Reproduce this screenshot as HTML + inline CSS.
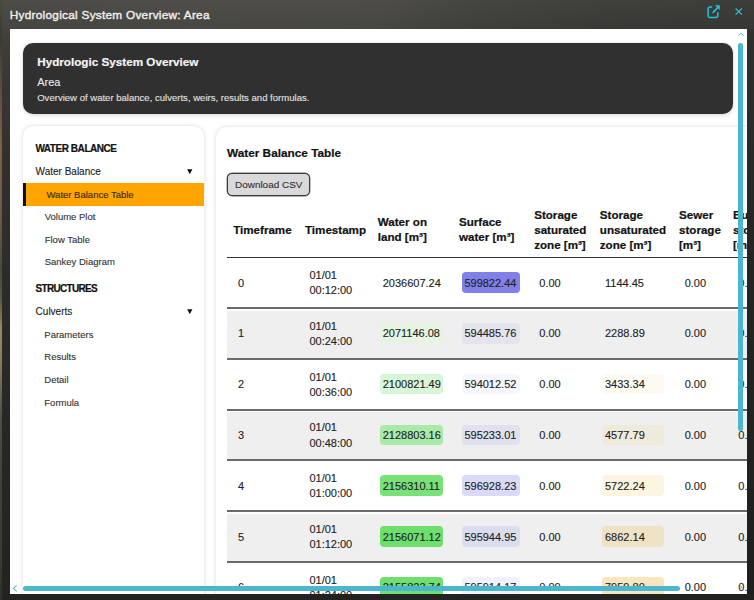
<!DOCTYPE html>
<html><head><meta charset="utf-8"><style>
html,body{margin:0;padding:0;width:754px;height:600px;overflow:hidden;position:relative;background:#2b2b29;font-family:"Liberation Sans",sans-serif}
.t{position:absolute;white-space:nowrap}
.t.r{-webkit-text-stroke:0.12px currentColor}
.t.b{-webkit-text-stroke:0.2px currentColor}
.ic{position:absolute}
#bg{position:absolute;left:0;top:0;width:754px;height:600px;background:linear-gradient(180deg,#4a4a3c 0px,#3a3a30 40px,#5a4a38 80px,#7a6448 150px,#6a5a42 220px,#4a4a36 270px,#5c5840 300px,#9a8a60 330px,#8a7c58 360px,#4a5040 420px,#3a4438 480px,#3a3c30 560px,#30302a 600px)}
#frame{position:absolute;left:2px;top:0;width:752px;height:600px;background:linear-gradient(90deg,rgba(0,0,0,0) 0%,rgba(0,0,0,0) 60%,rgba(0,0,0,0.12) 100%),linear-gradient(180deg,#4a4843 0px,#43413c 29px,#393835 70px,#32312f 150px,#2b2b29 300px,#262624 450px,#232321 600px)}
#panel{position:absolute;left:10px;top:29px;width:736.5px;height:565px;background:#fff;overflow:hidden}
#hdr{position:absolute;left:13px;top:14px;width:709.7px;height:71px;background:#303030;border-radius:10px;box-shadow:0 1px 4px rgba(0,0,0,0.17)}
#side{position:absolute;left:23px;top:125.5px;width:181px;height:520px;background:#fff;border-radius:10px;box-shadow:0 0 5px rgba(0,0,0,0.13),0 0 1px rgba(0,0,0,0.1)}
#active{position:absolute;left:23px;top:183px;width:181px;height:22.5px;background:#ffa500;box-shadow:inset 3px 0 0 #111}
.tri{position:absolute;width:0;height:0;border-left:3.3px solid transparent;border-right:3.3px solid transparent;border-top:5px solid #111}
#content{position:absolute;left:216px;top:126.5px;width:600px;height:520px;background:#fff;border-radius:10px;box-shadow:0 0 5px rgba(0,0,0,0.13),0 0 1px rgba(0,0,0,0.1)}
#btn{position:absolute;left:227px;top:172.5px;width:81.4px;height:21.8px;background:#d9d9d9;border:1px solid #3a3a3a;border-radius:5px;box-shadow:0 0 0 0.4px #666}
.hline{position:absolute;left:227px;width:520px}
.bd{position:absolute;border-radius:4px}
#vthumb{position:absolute;left:738.3px;top:42.6px;width:5px;height:388px;background:#4db6cf;border-radius:3px}
#hthumb{position:absolute;left:22.5px;top:585.8px;width:657.5px;height:5px;background:#4db6cf;border-radius:3px}
#rframe{position:absolute;left:746.5px;top:29px;width:7.5px;height:571px;background:linear-gradient(180deg,#30302d 0px,#252523 200px,#1f201e 571px)}
#topband{position:absolute;left:2px;top:0;width:752px;height:29px;background:linear-gradient(180deg,rgba(255,255,255,0.02),rgba(0,0,0,0.05)),linear-gradient(90deg,#4a4843 0px,#4c4a45 200px,#4a4944 380px,#41413d 480px,#3c3d39 600px,#393a36 751px)}
#bframe{position:absolute;left:2px;top:593.8px;width:752px;height:6.2px;background:#222221}
</style></head><body>
<div id="bg"></div><div id="frame"></div><div id="topband"></div><div class="t r" style="left:9.8px;top:8.24px;font-size:11.8px;line-height:15.34px;font-weight:400;color:#efefef;letter-spacing:0.27px;-webkit-text-stroke:0.4px #efefef">Hydrological System Overview: Area</div>
<svg class="ic" style="left:704px;top:2px" width="20" height="20" viewBox="0 0 20 20">
<path d="M8.2 4.9 H6.1 a2 2 0 0 0 -2 2 V13.6 a2 2 0 0 0 2 2 H11.8 a2 2 0 0 0 2 -2 V10.2" fill="none" stroke="#1fc3df" stroke-width="1.5"/>
<path d="M8.6 10.8 L13.9 5.5" stroke="#1fc3df" stroke-width="1.7" fill="none"/>
<path d="M10.9 3.2 H15.8 V8.1 Z" fill="#1fc3df"/>
</svg><svg class="ic" style="left:732px;top:5px" width="14" height="14" viewBox="0 0 14 14">
<path d="M3.6 3.5 L9.9 9.6 M9.9 3.5 L3.6 9.6" stroke="#3cb8d6" stroke-width="1.2" fill="none"/>
</svg><div id="panel"><div id="hdr"></div></div><div class="t b" style="left:37.2px;top:54.14px;font-size:11.7px;line-height:15.21px;font-weight:700;color:#f4f4f4;">Hydrologic System Overview</div>
<div class="t r" style="left:37.2px;top:74.64px;font-size:11px;line-height:14.3px;font-weight:400;color:#e8e8e8;">Area</div>
<div class="t r" style="left:37.2px;top:91.78px;font-size:9.55px;line-height:12.42px;font-weight:400;color:#e0e0e0;">Overview of water balance, culverts, weirs, results and formulas.</div>
<div id="side"></div><div id="active"></div><div class="t b" style="left:35.4px;top:142.23px;font-size:10px;line-height:13.0px;font-weight:700;color:#111;letter-spacing:-0.45px">WATER BALANCE</div>
<div class="t r" style="left:35.6px;top:164.63px;font-size:10px;line-height:13.0px;font-weight:400;color:#222;">Water Balance</div>
<svg class="ic" style="left:186.5px;top:168.6px" width="6" height="6" viewBox="0 0 6 6"><path d="M0.2 0.2 H5.4 L2.8 5.3 Z" fill="#111"/></svg><div class="t r" style="left:46.5px;top:188.73px;font-size:9.5px;line-height:12.35px;font-weight:400;color:#3a2a00;">Water Balance Table</div>
<div class="t r" style="left:44.7px;top:210.73px;font-size:9.5px;line-height:12.35px;font-weight:400;color:#333;">Volume Plot</div>
<div class="t r" style="left:44.7px;top:233.83px;font-size:9.5px;line-height:12.35px;font-weight:400;color:#333;">Flow Table</div>
<div class="t r" style="left:44.7px;top:256.13px;font-size:9.5px;line-height:12.35px;font-weight:400;color:#333;">Sankey Diagram</div>
<div class="t b" style="left:35.6px;top:282.44px;font-size:10px;line-height:13.0px;font-weight:700;color:#111;letter-spacing:-0.7px">STRUCTURES</div>
<div class="t r" style="left:35.6px;top:304.74px;font-size:10px;line-height:13.0px;font-weight:400;color:#222;">Culverts</div>
<svg class="ic" style="left:186.5px;top:308.7px" width="6" height="6" viewBox="0 0 6 6"><path d="M0.2 0.2 H5.4 L2.8 5.3 Z" fill="#111"/></svg><div class="t r" style="left:44.3px;top:328.73px;font-size:9.5px;line-height:12.35px;font-weight:400;color:#333;">Parameters</div>
<div class="t r" style="left:44.3px;top:351.43px;font-size:9.5px;line-height:12.35px;font-weight:400;color:#333;">Results</div>
<div class="t r" style="left:44.3px;top:374.13px;font-size:9.5px;line-height:12.35px;font-weight:400;color:#333;">Detail</div>
<div class="t r" style="left:44.3px;top:396.83px;font-size:9.5px;line-height:12.35px;font-weight:400;color:#333;">Formula</div>
<div id="content"></div><div class="t b" style="left:227px;top:145.54px;font-size:11.8px;line-height:15.34px;font-weight:700;color:#111;">Water Balance Table</div>
<div id="btn"></div><div class="t r" style="left:235px;top:178.99px;font-size:9.95px;line-height:12.93px;font-weight:400;color:#333;">Download CSV</div>
<div class="t b" style="left:233.2px;top:222.04px;font-size:11.6px;line-height:15.08px;font-weight:700;color:#111;">Timeframe</div>
<div class="t b" style="left:305px;top:222.04px;font-size:11.6px;line-height:15.08px;font-weight:700;color:#111;">Timestamp</div>
<div class="t b" style="left:377.8px;top:214.24px;font-size:11.6px;line-height:15.08px;font-weight:700;color:#111;">Water on</div>
<div class="t b" style="left:377.8px;top:229.24px;font-size:11.6px;line-height:15.08px;font-weight:700;color:#111;">land [m&sup3;]</div>
<div class="t b" style="left:459px;top:214.24px;font-size:11.6px;line-height:15.08px;font-weight:700;color:#111;">Surface</div>
<div class="t b" style="left:459px;top:229.24px;font-size:11.6px;line-height:15.08px;font-weight:700;color:#111;">water [m&sup3;]</div>
<div class="t b" style="left:534.2px;top:207.24px;font-size:11.6px;line-height:15.08px;font-weight:700;color:#111;">Storage</div>
<div class="t b" style="left:534.2px;top:222.24px;font-size:11.6px;line-height:15.08px;font-weight:700;color:#111;">saturated</div>
<div class="t b" style="left:534.2px;top:237.24px;font-size:11.6px;line-height:15.08px;font-weight:700;color:#111;">zone [m&sup3;]</div>
<div class="t b" style="left:599.8px;top:207.24px;font-size:11.6px;line-height:15.08px;font-weight:700;color:#111;">Storage</div>
<div class="t b" style="left:599.8px;top:222.24px;font-size:11.6px;line-height:15.08px;font-weight:700;color:#111;">unsaturated</div>
<div class="t b" style="left:599.8px;top:237.24px;font-size:11.6px;line-height:15.08px;font-weight:700;color:#111;">zone [m&sup3;]</div>
<div class="t b" style="left:679px;top:207.24px;font-size:11.6px;line-height:15.08px;font-weight:700;color:#111;">Sewer</div>
<div class="t b" style="left:679px;top:222.24px;font-size:11.6px;line-height:15.08px;font-weight:700;color:#111;">storage</div>
<div class="t b" style="left:679px;top:237.24px;font-size:11.6px;line-height:15.08px;font-weight:700;color:#111;">[m&sup3;]</div>
<div class="t b" style="left:733px;top:207.24px;font-size:11.6px;line-height:15.08px;font-weight:700;color:#111;">Buffer</div>
<div class="t b" style="left:733px;top:222.24px;font-size:11.6px;line-height:15.08px;font-weight:700;color:#111;">storage</div>
<div class="t b" style="left:733px;top:237.24px;font-size:11.6px;line-height:15.08px;font-weight:700;color:#111;">[m&sup3;]</div>
<div class="hline" style="top:257px;height:1px;background:#333"></div><div class="hline" style="top:307.00px;height:2px;background:#6a6a6a"></div><div class="bd" style="left:461.7px;top:272.20px;width:58px;height:20.6px;background:#8080e8"></div><div class="t r" style="left:238px;top:275.54px;font-size:11px;line-height:14.3px;font-weight:400;color:#222;">0</div>
<div class="t r" style="left:309.4px;top:268.04px;font-size:11px;line-height:14.3px;font-weight:400;color:#222;">01/01</div>
<div class="t r" style="left:309.4px;top:283.14px;font-size:11px;line-height:14.3px;font-weight:400;color:#222;">00:12:00</div>
<div class="t r" style="left:382.7px;top:275.54px;font-size:11px;line-height:14.3px;font-weight:400;color:#222;">2036607.24</div>
<div class="t r" style="left:464.4px;top:275.54px;font-size:11px;line-height:14.3px;font-weight:400;color:#222;">599822.44</div>
<div class="t r" style="left:539.3px;top:275.54px;font-size:11px;line-height:14.3px;font-weight:400;color:#222;">0.00</div>
<div class="t r" style="left:605.0px;top:275.54px;font-size:11px;line-height:14.3px;font-weight:400;color:#222;">1144.45</div>
<div class="t r" style="left:684.7px;top:275.54px;font-size:11px;line-height:14.3px;font-weight:400;color:#222;">0.00</div>
<div class="t r" style="left:738.3px;top:275.54px;font-size:11px;line-height:14.3px;font-weight:400;color:#222;">0.00</div>
<div class="hline" style="top:310.80px;height:46.80px;background:#efefef"></div><div class="hline" style="top:357.80px;height:2px;background:#6a6a6a"></div><div class="bd" style="left:380.2px;top:323.00px;width:63px;height:20.6px;background:#e7f4e4"></div><div class="bd" style="left:461.7px;top:323.00px;width:58px;height:20.6px;background:#e4e4ee"></div><div class="t r" style="left:238px;top:326.34px;font-size:11px;line-height:14.3px;font-weight:400;color:#222;">1</div>
<div class="t r" style="left:309.4px;top:318.84px;font-size:11px;line-height:14.3px;font-weight:400;color:#222;">01/01</div>
<div class="t r" style="left:309.4px;top:333.94px;font-size:11px;line-height:14.3px;font-weight:400;color:#222;">00:24:00</div>
<div class="t r" style="left:382.7px;top:326.34px;font-size:11px;line-height:14.3px;font-weight:400;color:#222;">2071146.08</div>
<div class="t r" style="left:464.4px;top:326.34px;font-size:11px;line-height:14.3px;font-weight:400;color:#222;">594485.76</div>
<div class="t r" style="left:539.3px;top:326.34px;font-size:11px;line-height:14.3px;font-weight:400;color:#222;">0.00</div>
<div class="t r" style="left:605.0px;top:326.34px;font-size:11px;line-height:14.3px;font-weight:400;color:#222;">2288.89</div>
<div class="t r" style="left:684.7px;top:326.34px;font-size:11px;line-height:14.3px;font-weight:400;color:#222;">0.00</div>
<div class="t r" style="left:738.3px;top:326.34px;font-size:11px;line-height:14.3px;font-weight:400;color:#222;">0.00</div>
<div class="hline" style="top:408.60px;height:2px;background:#6a6a6a"></div><div class="bd" style="left:380.2px;top:373.80px;width:63px;height:20.6px;background:#d8f7d8"></div><div class="bd" style="left:461.7px;top:373.80px;width:58px;height:20.6px;background:#f6f6fd"></div><div class="bd" style="left:601.7px;top:373.80px;width:62.3px;height:20.6px;background:#fdfaf1"></div><div class="t r" style="left:238px;top:377.14px;font-size:11px;line-height:14.3px;font-weight:400;color:#222;">2</div>
<div class="t r" style="left:309.4px;top:369.64px;font-size:11px;line-height:14.3px;font-weight:400;color:#222;">01/01</div>
<div class="t r" style="left:309.4px;top:384.74px;font-size:11px;line-height:14.3px;font-weight:400;color:#222;">00:36:00</div>
<div class="t r" style="left:382.7px;top:377.14px;font-size:11px;line-height:14.3px;font-weight:400;color:#222;">2100821.49</div>
<div class="t r" style="left:464.4px;top:377.14px;font-size:11px;line-height:14.3px;font-weight:400;color:#222;">594012.52</div>
<div class="t r" style="left:539.3px;top:377.14px;font-size:11px;line-height:14.3px;font-weight:400;color:#222;">0.00</div>
<div class="t r" style="left:605.0px;top:377.14px;font-size:11px;line-height:14.3px;font-weight:400;color:#222;">3433.34</div>
<div class="t r" style="left:684.7px;top:377.14px;font-size:11px;line-height:14.3px;font-weight:400;color:#222;">0.00</div>
<div class="t r" style="left:738.3px;top:377.14px;font-size:11px;line-height:14.3px;font-weight:400;color:#222;">0.00</div>
<div class="hline" style="top:412.40px;height:46.80px;background:#efefef"></div><div class="hline" style="top:459.40px;height:2px;background:#6a6a6a"></div><div class="bd" style="left:380.2px;top:424.60px;width:63px;height:20.6px;background:#a9eaa9"></div><div class="bd" style="left:461.7px;top:424.60px;width:58px;height:20.6px;background:#e0e0ee"></div><div class="bd" style="left:601.7px;top:424.60px;width:62.3px;height:20.6px;background:#eeeadc"></div><div class="t r" style="left:238px;top:427.94px;font-size:11px;line-height:14.3px;font-weight:400;color:#222;">3</div>
<div class="t r" style="left:309.4px;top:420.44px;font-size:11px;line-height:14.3px;font-weight:400;color:#222;">01/01</div>
<div class="t r" style="left:309.4px;top:435.54px;font-size:11px;line-height:14.3px;font-weight:400;color:#222;">00:48:00</div>
<div class="t r" style="left:382.7px;top:427.94px;font-size:11px;line-height:14.3px;font-weight:400;color:#222;">2128803.16</div>
<div class="t r" style="left:464.4px;top:427.94px;font-size:11px;line-height:14.3px;font-weight:400;color:#222;">595233.01</div>
<div class="t r" style="left:539.3px;top:427.94px;font-size:11px;line-height:14.3px;font-weight:400;color:#222;">0.00</div>
<div class="t r" style="left:605.0px;top:427.94px;font-size:11px;line-height:14.3px;font-weight:400;color:#222;">4577.79</div>
<div class="t r" style="left:684.7px;top:427.94px;font-size:11px;line-height:14.3px;font-weight:400;color:#222;">0.00</div>
<div class="t r" style="left:738.3px;top:427.94px;font-size:11px;line-height:14.3px;font-weight:400;color:#222;">0.00</div>
<div class="hline" style="top:510.20px;height:2px;background:#6a6a6a"></div><div class="bd" style="left:380.2px;top:475.40px;width:63px;height:20.6px;background:#78e278"></div><div class="bd" style="left:461.7px;top:475.40px;width:58px;height:20.6px;background:#d9d9f8"></div><div class="bd" style="left:601.7px;top:475.40px;width:62.3px;height:20.6px;background:#fcf5e1"></div><div class="t r" style="left:238px;top:478.74px;font-size:11px;line-height:14.3px;font-weight:400;color:#222;">4</div>
<div class="t r" style="left:309.4px;top:471.24px;font-size:11px;line-height:14.3px;font-weight:400;color:#222;">01/01</div>
<div class="t r" style="left:309.4px;top:486.34px;font-size:11px;line-height:14.3px;font-weight:400;color:#222;">01:00:00</div>
<div class="t r" style="left:382.7px;top:478.74px;font-size:11px;line-height:14.3px;font-weight:400;color:#222;">2156310.11</div>
<div class="t r" style="left:464.4px;top:478.74px;font-size:11px;line-height:14.3px;font-weight:400;color:#222;">596928.23</div>
<div class="t r" style="left:539.3px;top:478.74px;font-size:11px;line-height:14.3px;font-weight:400;color:#222;">0.00</div>
<div class="t r" style="left:605.0px;top:478.74px;font-size:11px;line-height:14.3px;font-weight:400;color:#222;">5722.24</div>
<div class="t r" style="left:684.7px;top:478.74px;font-size:11px;line-height:14.3px;font-weight:400;color:#222;">0.00</div>
<div class="t r" style="left:738.3px;top:478.74px;font-size:11px;line-height:14.3px;font-weight:400;color:#222;">0.00</div>
<div class="hline" style="top:514.00px;height:46.80px;background:#efefef"></div><div class="hline" style="top:561.00px;height:2px;background:#6a6a6a"></div><div class="bd" style="left:380.2px;top:526.20px;width:63px;height:20.6px;background:#6ddf6d"></div><div class="bd" style="left:461.7px;top:526.20px;width:58px;height:20.6px;background:#dcdcf0"></div><div class="bd" style="left:601.7px;top:526.20px;width:62.3px;height:20.6px;background:#efe3c6"></div><div class="t r" style="left:238px;top:529.54px;font-size:11px;line-height:14.3px;font-weight:400;color:#222;">5</div>
<div class="t r" style="left:309.4px;top:522.04px;font-size:11px;line-height:14.3px;font-weight:400;color:#222;">01/01</div>
<div class="t r" style="left:309.4px;top:537.14px;font-size:11px;line-height:14.3px;font-weight:400;color:#222;">01:12:00</div>
<div class="t r" style="left:382.7px;top:529.54px;font-size:11px;line-height:14.3px;font-weight:400;color:#222;">2156071.12</div>
<div class="t r" style="left:464.4px;top:529.54px;font-size:11px;line-height:14.3px;font-weight:400;color:#222;">595944.95</div>
<div class="t r" style="left:539.3px;top:529.54px;font-size:11px;line-height:14.3px;font-weight:400;color:#222;">0.00</div>
<div class="t r" style="left:605.0px;top:529.54px;font-size:11px;line-height:14.3px;font-weight:400;color:#222;">6862.14</div>
<div class="t r" style="left:684.7px;top:529.54px;font-size:11px;line-height:14.3px;font-weight:400;color:#222;">0.00</div>
<div class="t r" style="left:738.3px;top:529.54px;font-size:11px;line-height:14.3px;font-weight:400;color:#222;">0.00</div>
<div class="hline" style="top:611.80px;height:2px;background:#6a6a6a"></div><div class="bd" style="left:380.2px;top:577.00px;width:63px;height:20.6px;background:#6fe06f"></div><div class="bd" style="left:461.7px;top:577.00px;width:58px;height:20.6px;background:#f1f1fb"></div><div class="bd" style="left:601.7px;top:577.00px;width:62.3px;height:20.6px;background:#f7e6bf"></div><div class="t r" style="left:238px;top:580.34px;font-size:11px;line-height:14.3px;font-weight:400;color:#222;">6</div>
<div class="t r" style="left:309.4px;top:572.84px;font-size:11px;line-height:14.3px;font-weight:400;color:#222;">01/01</div>
<div class="t r" style="left:309.4px;top:587.94px;font-size:11px;line-height:14.3px;font-weight:400;color:#222;">01:24:00</div>
<div class="t r" style="left:382.7px;top:580.34px;font-size:11px;line-height:14.3px;font-weight:400;color:#222;">2155823.74</div>
<div class="t r" style="left:464.4px;top:580.34px;font-size:11px;line-height:14.3px;font-weight:400;color:#222;">595914.17</div>
<div class="t r" style="left:539.3px;top:580.34px;font-size:11px;line-height:14.3px;font-weight:400;color:#222;">0.00</div>
<div class="t r" style="left:605.0px;top:580.34px;font-size:11px;line-height:14.3px;font-weight:400;color:#222;">7959.80</div>
<div class="t r" style="left:684.7px;top:580.34px;font-size:11px;line-height:14.3px;font-weight:400;color:#222;">0.00</div>
<div class="t r" style="left:738.3px;top:580.34px;font-size:11px;line-height:14.3px;font-weight:400;color:#222;">0.00</div>
<div id="vthumb"></div><svg class="ic" style="left:736px;top:31px" width="10" height="8" viewBox="0 0 10 8"><path d="M2.3 4.8 L5 2.2 L7.7 4.8" stroke="#5bbdd6" stroke-width="1" fill="none"/></svg><div id="hthumb"></div><svg class="ic" style="left:11px;top:584px" width="8" height="10" viewBox="0 0 8 10"><path d="M5.6 1.4 L2.4 4.4 L5.6 7.4" stroke="#4fb9d3" stroke-width="1.1" fill="none"/></svg><svg class="ic" style="left:737px;top:582px" width="8" height="10" viewBox="0 0 8 10"><path d="M2.5 3 L5 5.3 L2.5 7.6" stroke="#9a9a9a" stroke-width="0.9" fill="none"/></svg><div id="rframe"></div><div id="bframe"></div>
</body></html>
